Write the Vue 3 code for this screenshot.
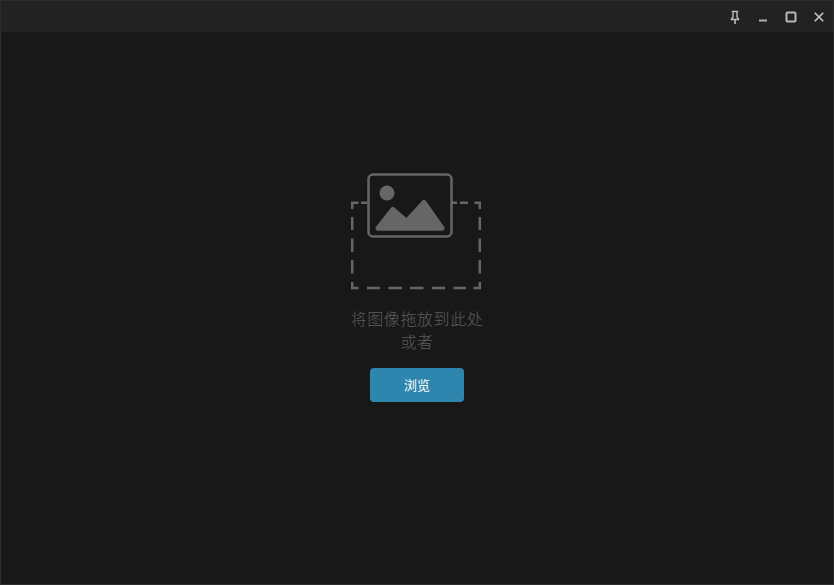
<script setup>
const dropText = '将图像拖放到此处'
</script>

<template>
  <div class="window">
    <header class="titlebar">
      <button class="win-btn">
        <svg width="14" height="14" viewBox="0 0 14 14">
          <path d="M3.800 1.500h6.400M5 1.500v5.800l-1.500 1.500v.7h7v-.7L9 7.300V1.500" fill="none" stroke="#bdbdbd" stroke-width="1.400" />
          <path d="M7 9.500V15" stroke="#bdbdbd" stroke-width="1.600" />
        </svg>
      </button>
      <button class="win-btn">
        <svg width="14" height="14" viewBox="0 0 14 14">
          <path d="M3 10.500h8" stroke="#b0b0b0" stroke-width="2" />
        </svg>
      </button>
      <button class="win-btn">
        <svg width="14" height="14" viewBox="0 0 14 14">
          <rect x="2.500" y="2.500" width="9" height="9" rx="1" fill="none" stroke="#b8b8b8" stroke-width="2" />
        </svg>
      </button>
      <button class="win-btn">
        <svg width="14" height="14" viewBox="0 0 14 14">
          <path d="M2.800 2.800l8.400 8.400M11.200 2.800l-8.400 8.400" stroke="#c8c8c8" stroke-width="1.600" />
        </svg>
      </button>
    </header>

    <main class="drop-area">
      <svg class="illustration" width="132" height="118" viewBox="0 0 132 118">
        <g fill="none" stroke="#666" stroke-width="2.500">
          <!-- short runs on top, the picture covers the middle -->
          <path d="M7.500 29.800H1.200V36M10 29.800h6.500M101 29.800h5M109 29.800h8M123.500 29.800h5.300V36" />
          <path d="M1.200 44V57M1.200 65.500V79M1.200 87V100.500M1.200 109V115H7.500" />
          <path d="M128.800 44V57M128.800 65.500V79M128.800 87V100.500M128.800 109V115H122.500" />
          <path d="M16 115H29M37.500 115H51M59 115H72.500M81 115H94M102.500 115H115" />
        </g>
        <rect x="17.500" y="1.500" width="83" height="62" rx="4.500" fill="none" stroke="#666" stroke-width="2.500" />
        <circle cx="36" cy="20" r="7.500" fill="#666" />
        <path
          d="M27 55.200L41.700 36.500L55.500 48.500L73 29.500L91 55.200Z"
          fill="#666"
          stroke="#666"
          stroke-width="5"
          stroke-linejoin="round"
        />
      </svg>
      <p class="hint">{{ dropText }}<br />或者</p>
      <button class="browse">浏览</button>
    </main>
  </div>
</template>

<style scoped>
.window {
  width: 834px;
  height: 585px;
  box-sizing: border-box;
  border: 1px solid #2d2d2d;
  background: #181818;
  display: flex;
  flex-direction: column;
  font-family: "Noto Sans CJK SC", "Liberation Sans", sans-serif;
}

.titlebar {
  height: 31px;
  flex: none;
  background: #222;
  display: flex;
  justify-content: flex-end;
  align-items: center;
}

.win-btn {
  width: 28px;
  height: 28px;
  padding: 0;
  border: none;
  background: transparent;
  display: flex;
  align-items: center;
  justify-content: center;
}

.drop-area {
  flex: 1;
  display: flex;
  flex-direction: column;
  align-items: center;
  padding-top: 141px;
}

.illustration {
  display: block;
}

.hint {
  margin: 16px 0 0;
  color: #5c5c5c;
  font-size: 16px;
  font-weight: 300;
  line-height: 23px;
  letter-spacing: 0.6px;
  text-align: center;
}

.browse {
  margin-top: 15px;
  width: 94px;
  height: 34px;
  border: none;
  border-radius: 4px;
  background: #2e86ae;
  color: #fff;
  font-family: inherit;
  font-size: 13px;
  padding: 0 0 2px;
}
</style>

<style>
html,
body {
  margin: 0;
  background: #181818;
  overflow: hidden;
}
</style>
